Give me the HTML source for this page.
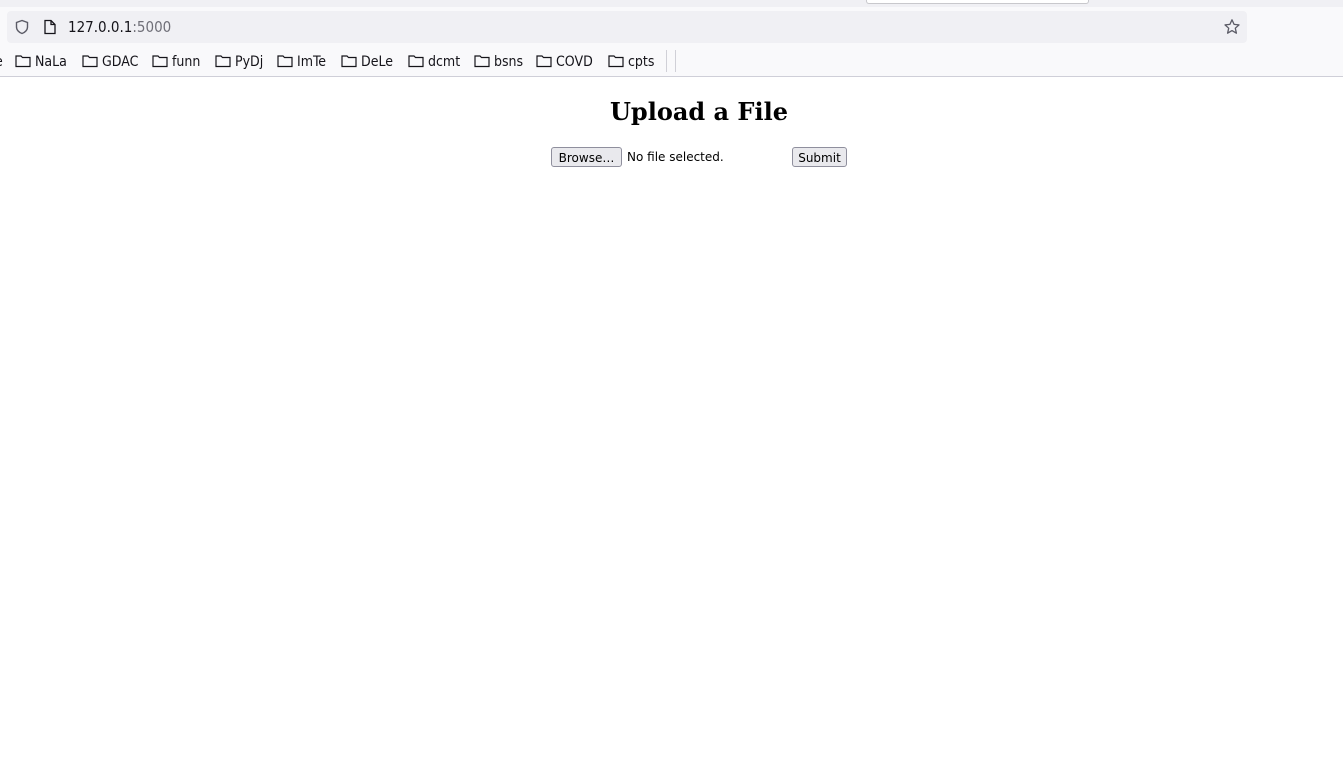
<!DOCTYPE html>
<html><head><style>
body{margin:0;width:1343px;height:758px;overflow:hidden;background:#fff;position:relative;font-family:"DejaVu Sans","Liberation Sans",sans-serif}
.top{position:absolute;left:0;top:0;width:1343px;height:7px;background:#f0f0f4}
.tab{position:absolute;left:866px;top:0;width:221px;height:3px;background:#fff;border:1px solid #c8c8cc;border-top:none;border-radius:0 0 3px 3px}
.tb{position:absolute;left:0;top:7px;width:1343px;height:69px;background:#f9f9fb;border-bottom:1px solid #cfcfd8}
.url{position:absolute;left:7px;top:11px;width:1240px;height:32px;background:#f0f0f4;border-radius:4px}
.ut{position:absolute;left:68px;top:18px;font-size:15px;color:#15141a;font-family:"DejaVu Sans Condensed","DejaVu Sans",sans-serif}
.bm{position:absolute;top:54px;font-size:14px;color:#15141a;font-family:"DejaVu Sans Condensed","DejaVu Sans",sans-serif;white-space:nowrap}
.bm svg{vertical-align:-2px;margin-right:4px}
h1{position:absolute;left:0;width:1398px;top:97px;margin:0;text-align:center;font:bold 24px "DejaVu Serif","Liberation Serif",serif}
.btn{position:absolute;top:147px;height:18px;background:#e9e9ed;border:1px solid #8f8f9d;border-radius:3px;font-size:12px;line-height:20px;text-align:center;box-sizing:content-box;color:#000}
.nf{position:absolute;left:627px;top:150px;font-size:12px}
</style></head><body>
<div class="top"></div><div class="tab"></div>
<div class="tb"></div>
<div class="url"></div>
<svg style="position:absolute;left:14px;top:19px" width="16" height="16" viewBox="0 0 16 16"><path d="M8 1.5 L2.5 3.5 V8 C2.5 11 5 13.5 8 14.5 C11 13.5 13.5 11 13.5 8 V3.5 Z" fill="none" stroke="#5b5b66" stroke-width="1.4"/></svg>
<svg style="position:absolute;left:43px;top:19px" width="14" height="16" viewBox="0 0 14 16"><path d="M2 1.5 H8 L12 5.5 V14.5 H2 Z M8 1.5 V5.5 H12" fill="none" stroke="#15141a" stroke-width="1.3"/></svg>
<div class="ut">127.0.0.1<span style="color:#6f6f78">:5000</span></div>
<svg style="position:absolute;left:1223px;top:18px" width="18" height="18" viewBox="0 0 18 18"><path d="M9 1.8 L11.1 6.4 L16 6.9 L12.3 10.2 L13.4 15.2 L9 12.6 L4.6 15.2 L5.7 10.2 L2 6.9 L6.9 6.4 Z" fill="none" stroke="#5b5b66" stroke-width="1.3" stroke-linejoin="round"/></svg>
<div class="bm" style="left:-5px">e</div>
<div class="bm" style="left:15px"><svg width="16" height="14" viewBox="0 0 16 14"><path d="M1 2 H6 L7.5 3.5 H15 V12.5 H1 Z" fill="none" stroke="#15141a" stroke-width="1.2"/></svg>NaLa</div>
<div class="bm" style="left:82px"><svg width="16" height="14" viewBox="0 0 16 14"><path d="M1 2 H6 L7.5 3.5 H15 V12.5 H1 Z" fill="none" stroke="#15141a" stroke-width="1.2"/></svg>GDAC</div>
<div class="bm" style="left:152px"><svg width="16" height="14" viewBox="0 0 16 14"><path d="M1 2 H6 L7.5 3.5 H15 V12.5 H1 Z" fill="none" stroke="#15141a" stroke-width="1.2"/></svg>funn</div>
<div class="bm" style="left:215px"><svg width="16" height="14" viewBox="0 0 16 14"><path d="M1 2 H6 L7.5 3.5 H15 V12.5 H1 Z" fill="none" stroke="#15141a" stroke-width="1.2"/></svg>PyDj</div>
<div class="bm" style="left:277px"><svg width="16" height="14" viewBox="0 0 16 14"><path d="M1 2 H6 L7.5 3.5 H15 V12.5 H1 Z" fill="none" stroke="#15141a" stroke-width="1.2"/></svg>ImTe</div>
<div class="bm" style="left:341px"><svg width="16" height="14" viewBox="0 0 16 14"><path d="M1 2 H6 L7.5 3.5 H15 V12.5 H1 Z" fill="none" stroke="#15141a" stroke-width="1.2"/></svg>DeLe</div>
<div class="bm" style="left:408px"><svg width="16" height="14" viewBox="0 0 16 14"><path d="M1 2 H6 L7.5 3.5 H15 V12.5 H1 Z" fill="none" stroke="#15141a" stroke-width="1.2"/></svg>dcmt</div>
<div class="bm" style="left:474px"><svg width="16" height="14" viewBox="0 0 16 14"><path d="M1 2 H6 L7.5 3.5 H15 V12.5 H1 Z" fill="none" stroke="#15141a" stroke-width="1.2"/></svg>bsns</div>
<div class="bm" style="left:536px"><svg width="16" height="14" viewBox="0 0 16 14"><path d="M1 2 H6 L7.5 3.5 H15 V12.5 H1 Z" fill="none" stroke="#15141a" stroke-width="1.2"/></svg>COVD</div>
<div class="bm" style="left:608px"><svg width="16" height="14" viewBox="0 0 16 14"><path d="M1 2 H6 L7.5 3.5 H15 V12.5 H1 Z" fill="none" stroke="#15141a" stroke-width="1.2"/></svg>cpts</div>
<div style="position:absolute;left:666px;top:50px;width:1px;height:22px;background:#d0d0d7"></div>
<div style="position:absolute;left:675px;top:50px;width:1px;height:22px;background:#d0d0d7"></div>
<h1>Upload a File</h1>
<div class="btn" style="left:551px;width:69px">Browse…</div>
<div class="nf">No file selected.</div>
<div class="btn" style="left:792px;width:53px">Submit</div>
</body></html>
